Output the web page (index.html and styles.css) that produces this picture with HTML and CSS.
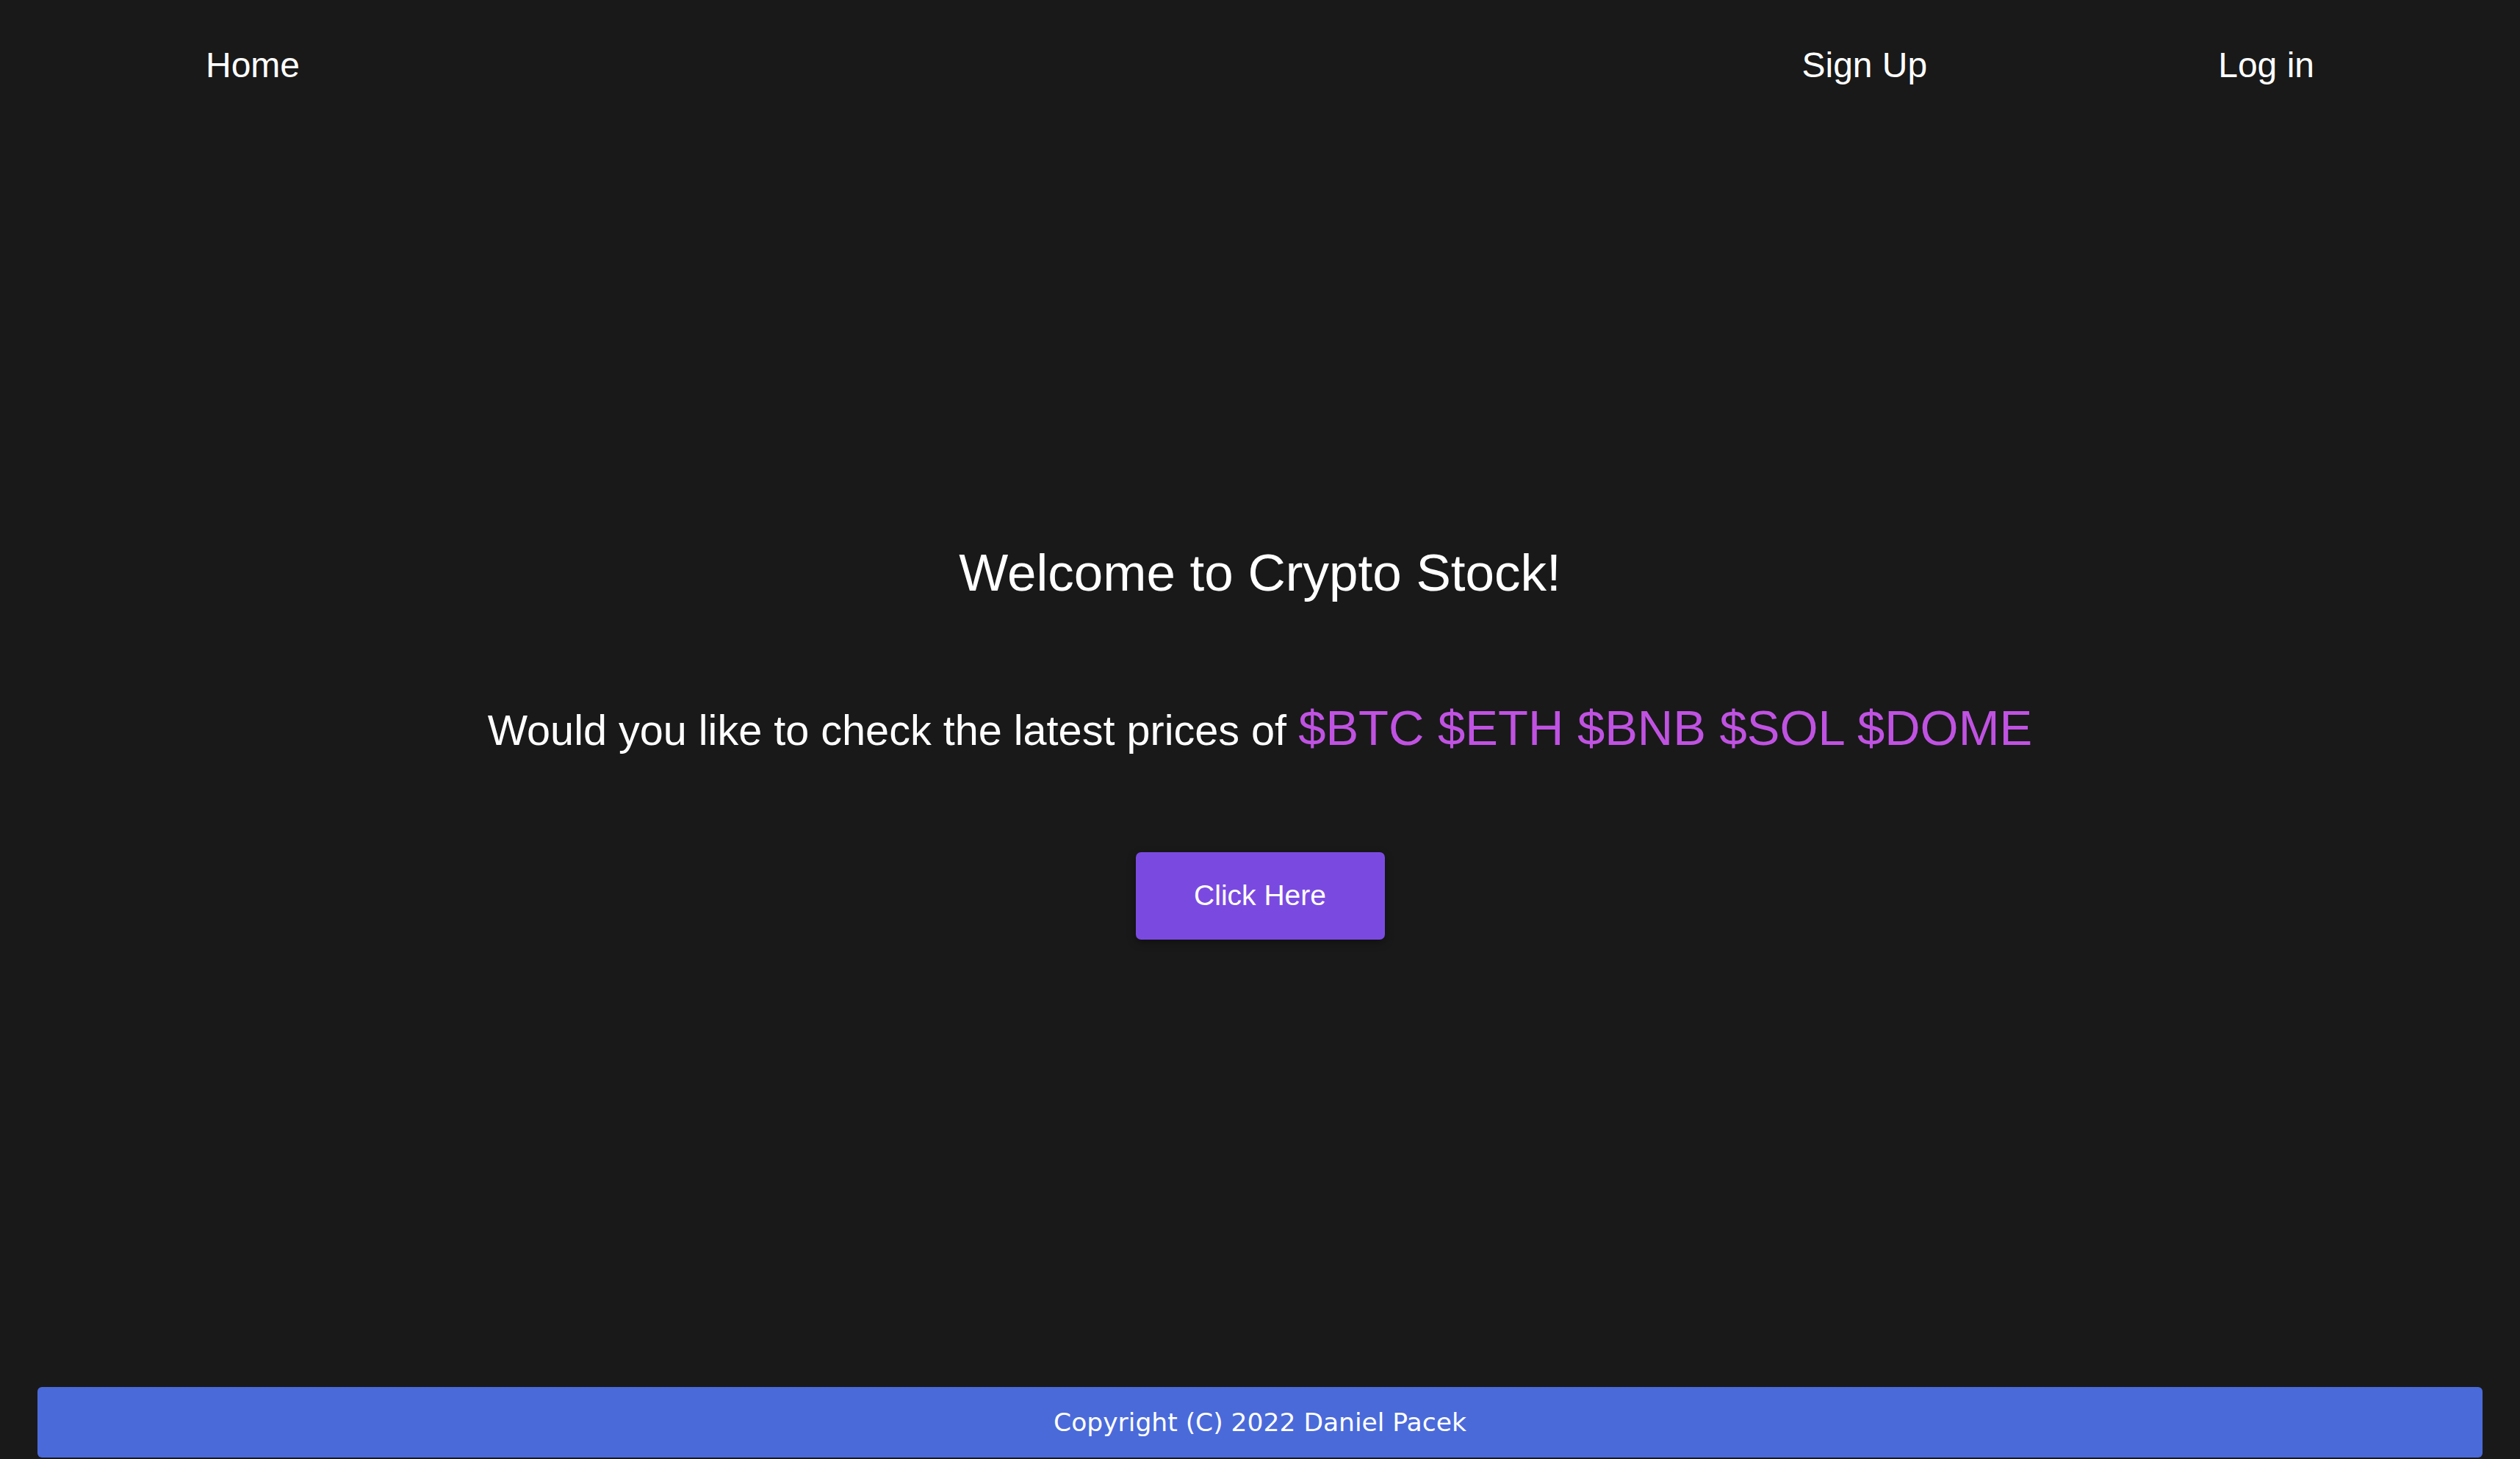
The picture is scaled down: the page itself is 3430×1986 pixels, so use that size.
FILE: index.html
```html
<!DOCTYPE html>
<html lang="en">
<head>
<meta charset="utf-8">
<title>Crypto Stock</title>
<link rel="stylesheet" href="styles.css">
</head>
<body>
<div class="page">
  <nav class="nav">
    <a class="nav-link" href="#">Home</a>
    <div class="nav-right">
      <a class="nav-link" href="#">Sign Up</a>
      <a class="nav-link" href="#">Log in</a>
    </div>
  </nav>
  <main class="hero">
    <h1 class="title">Welcome to Crypto Stock!</h1>
    <p class="question">Would you like to check the latest prices of <span class="tickers">$BTC $ETH $BNB $SOL $DOME</span></p>
    <a class="cta" href="#">Click Here</a>
  </main>
  <footer class="footer">Copyright (C) 2022 Daniel Pacek</footer>
</div>
</body>
</html>
```
FILE: styles.css
```css
html, body {
  margin: 0;
  padding: 0;
  background: #191919;
}
body {
  font-family: "Liberation Sans", Arial, sans-serif;
  color: #ffffff;
}
.page {
  min-height: 100vh;
  display: flex;
  flex-direction: column;
}
.nav {
  display: flex;
  justify-content: space-between;
  padding: 61px 280px 0 280px;
}
.nav-right {
  display: flex;
  gap: 396px;
}
.nav-link {
  color: #ffffff;
  text-decoration: none;
  font-size: 48px;
  line-height: 56px;
}
.hero {
  flex: 1;
  display: flex;
  flex-direction: column;
  align-items: center;
  justify-content: center;
  padding-top: 10px;
}
.title {
  margin: 0;
  font-size: 71px;
  font-weight: 400;
  line-height: 86px;
}
.question {
  margin: 128px 0 0 0;
  font-size: 57.6px;
  line-height: 80px;
}
.tickers {
  color: #c052e2;
  font-size: 67px;
  line-height: 80px;
}
.cta {
  margin-top: 126px;
  width: 339px;
  height: 119px;
  display: flex;
  align-items: center;
  justify-content: center;
  background: #7a4ae0;
  color: #ffffff;
  text-decoration: none;
  font-size: 39px;
  border-radius: 7px;
  box-shadow: 0 4px 12px rgba(0, 0, 0, 0.35);
}
.footer {
  width: 97%;
  height: 96px;
  margin: 0 auto 2px auto;
  display: flex;
  align-items: center;
  justify-content: center;
  background: #4a6ada;
  border-radius: 6px;
  font-family: "DejaVu Sans", sans-serif;
  font-size: 34.5px;
  color: #ffffff;
}
```
